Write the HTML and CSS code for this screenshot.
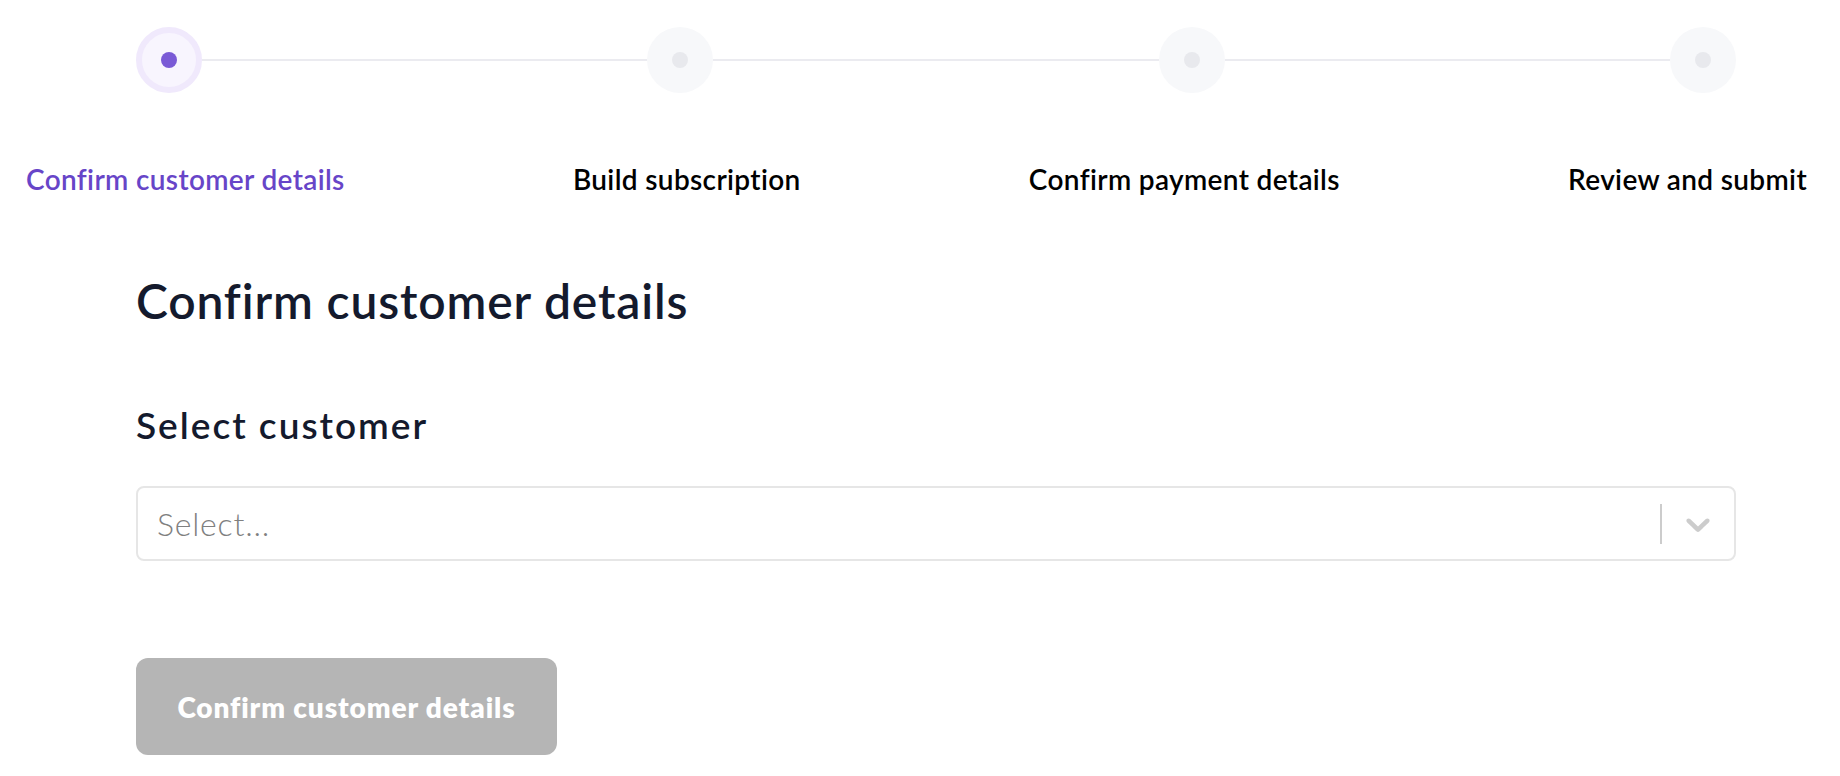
FILE: index.html
```html
<!DOCTYPE html>
<html lang="en">
<head>
    <meta charset="UTF-8">
    <meta name="viewport" content="width=device-width, initial-scale=1.0">
    <title>New subscription</title>
    <link rel="stylesheet" href="styles.css">
</head>
<body>

    <!-- Progress stepper -->
    <div class="steps">
        <span class="step active"><span class="dot"></span></span>
        <span class="step-line"></span>
        <span class="step"><span class="dot"></span></span>
        <span class="step-line"></span>
        <span class="step"><span class="dot"></span></span>
        <span class="step-line"></span>
        <span class="step"><span class="dot"></span></span>
    </div>

    <div class="step-labels">
        <span class="step-label active">Confirm customer details</span>
        <span class="step-label">Build subscription</span>
        <span class="step-label">Confirm payment details</span>
        <span class="step-label">Review and submit</span>
    </div>

    <!-- Current step -->
    <main class="content">
        <h1>Confirm customer details</h1>

        <h2>Select customer</h2>

        <div class="select">
            <span class="select-placeholder">Select...</span>
            <span class="select-separator"></span>
            <span class="select-indicator">
                <svg width="40" height="40" viewBox="0 0 20 20" aria-hidden="true">
                    <path d="M4.516 7.548c0.436-0.446 1.043-0.481 1.576 0l3.908 3.747 3.908-3.747c0.533-0.481 1.141-0.446 1.574 0 0.436 0.445 0.408 1.197 0 1.615-0.406 0.418-4.695 4.502-4.695 4.502-0.217 0.223-0.502 0.335-0.787 0.335s-0.57-0.112-0.789-0.335c0 0-4.287-4.084-4.695-4.502s-0.436-1.17 0-1.615z"></path>
                </svg>
            </span>
        </div>

        <button type="button" class="confirm-btn" disabled>Confirm customer details</button>
    </main>

</body>
</html>
```

FILE: styles.css
```css
body {
    margin: 0;
    background-color: #ffffff;
    font-family: Lato, "Noto Sans", sans-serif;
    color: #141a2d;
}

/* stepper */
.steps {
    display: flex;
    align-items: center;
    padding: 27px 104px 0 136px;
}

.step {
    width: 66px;
    height: 66px;
    box-sizing: border-box;
    border-radius: 50%;
    background-color: #f7f8fa;
    display: flex;
    align-items: center;
    justify-content: center;
    flex-shrink: 0;
}

.step .dot {
    width: 16px;
    height: 16px;
    border-radius: 50%;
    background-color: #e8e9ed;
}

.step.active {
    border: 6px solid #f0e9fc;
    background-color: #f8f5fe;
}

.step.active .dot {
    background-color: #7a5ad6;
}

.step-line {
    flex: 1;
    height: 2px;
    background-color: #ebebf0;
}

.step-labels {
    display: flex;
    justify-content: space-between;
    margin-top: 69px;
    padding: 0 33px 0 26px;
    font-size: 28px;
    line-height: 34px;
    font-weight: 600;
    letter-spacing: 0.35px;
    color: #000000;
}

.step-label.active {
    color: #6745c8;
}

/* content */
.content {
    padding: 0 104px 0 136px;
}

h1 {
    margin: 76px 0 0;
    font-size: 48px;
    line-height: 58px;
    font-weight: 600;
    letter-spacing: 0.85px;
}

h2 {
    margin: 73px 0 0;
    font-size: 37px;
    line-height: 43px;
    font-weight: 600;
    letter-spacing: 2px;
}

.select {
    display: flex;
    align-items: center;
    height: 75px;
    box-sizing: border-box;
    margin-top: 40px;
    border: 2px solid #e6e6e6;
    border-radius: 8px;
    background-color: #ffffff;
}

.select-placeholder {
    flex: 1;
    padding-left: 19px;
    font-size: 32px;
    font-weight: 300;
    letter-spacing: 0.8px;
    color: #808080;
}

.select-separator {
    width: 2px;
    height: 40px;
    background-color: #cccccc;
}

.select-indicator {
    display: flex;
    padding: 0 16px;
}

.select-indicator svg {
    fill: #cccccc;
}

.confirm-btn {
    display: block;
    width: 421px;
    height: 97px;
    margin-top: 97px;
    border: none;
    border-radius: 12px;
    background-color: #b5b5b5;
    color: #ffffff;
    font-family: Lato, "Noto Sans", sans-serif;
    font-size: 28px;
    font-weight: 800;
    letter-spacing: 0.9px;
}
```
